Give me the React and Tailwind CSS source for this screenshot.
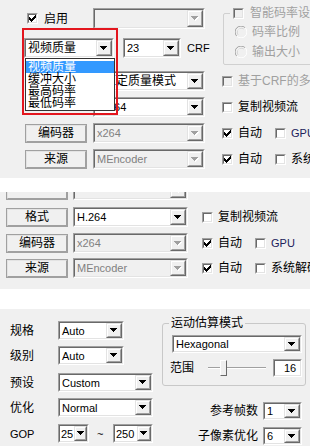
import React from "react";

const FONT = "font-['Liberation_Sans','Noto_Sans_CJK_SC',sans-serif]";

function Sunken({ className = "", disabled = false, children }) {
  return (
    <div className={`shrink-0 border border-t-[#a0a0a0] border-l-[#a0a0a0] border-r-white border-b-white ${className}`}>
      <div className={`flex h-full w-full items-stretch border border-t-[#696969] border-l-[#696969] border-r-[#e3e3e3] border-b-[#e3e3e3] ${disabled ? "bg-[#f0f0f0]" : "bg-white"}`}>
        {children}
      </div>
    </div>
  );
}

function Raised({ className = "", children }) {
  return (
    <div className={`shrink-0 border border-t-[#e3e3e3] border-l-[#e3e3e3] border-r-[#696969] border-b-[#696969] ${className}`}>
      <div className="flex h-full w-full items-center justify-center border border-t-white border-l-white border-r-[#a0a0a0] border-b-[#a0a0a0] bg-[#f0f0f0]">
        {children}
      </div>
    </div>
  );
}

function Tri({ disabled = false }) {
  const c = disabled ? "#a0a0a0" : "#000";
  return (
    <svg width="8" height="5" viewBox="0 0 8 5" shapeRendering="crispEdges">
      {disabled && (
        <g fill="#fff">
          <rect x="1" y="1" width="7" height="1" />
          <rect x="2" y="2" width="5" height="1" />
          <rect x="3" y="3" width="3" height="1" />
          <rect x="4" y="4" width="1" height="1" />
        </g>
      )}
      <g fill={c}>
        <rect x="0" y="0" width="7" height="1" />
        <rect x="1" y="1" width="5" height="1" />
        <rect x="2" y="2" width="3" height="1" />
        <rect x="3" y="3" width="1" height="1" />
      </g>
    </svg>
  );
}

function Combo({ className = "", text = "", disabled = false, arrowDisabled = false, textClass = "", padL = "pl-[2px]", arrowW = "w-[16px]" }) {
  return (
    <Sunken className={className} disabled={disabled}>
      <div className={`flex min-w-0 flex-1 items-center overflow-hidden whitespace-nowrap ${padL} ${textClass}`}>{text}</div>
      <Raised className={`h-full ${arrowW}`}>
        <Tri disabled={arrowDisabled} />
      </Raised>
    </Sunken>
  );
}

function Btn({ className = "", children }) {
  return (
    <div className={`shrink-0 border border-t-white border-l-white border-r-[#696969] border-b-[#696969] ${className}`}>
      <div className="flex h-full w-full items-center justify-center border border-t-[#e3e3e3] border-l-[#e3e3e3] border-r-[#a0a0a0] border-b-[#a0a0a0] bg-[#f0f0f0] outline outline-1 outline-[#a0a0a0]">
        {children}
      </div>
    </div>
  );
}

function Check({ checked = false, disabled = false }) {
  return (
    <div className="h-[11px] w-[11px] shrink-0 border border-t-[#a0a0a0] border-l-[#a0a0a0] border-r-white border-b-white">
      <div className={`flex h-full w-full items-center justify-center border border-t-[#696969] border-l-[#696969] border-r-[#e3e3e3] border-b-[#e3e3e3] ${disabled ? "bg-[#f0f0f0]" : "bg-white"}`}>
        {checked && (
          <svg width="7" height="7" viewBox="0 0 7 7" shapeRendering="crispEdges">
            <g fill="#000">
              <rect x="6" y="0" width="1" height="3" />
              <rect x="5" y="1" width="1" height="3" />
              <rect x="4" y="2" width="1" height="3" />
              <rect x="3" y="3" width="1" height="3" />
              <rect x="2" y="4" width="1" height="3" />
              <rect x="1" y="3" width="1" height="3" />
              <rect x="0" y="2" width="1" height="3" />
            </g>
          </svg>
        )}
      </div>
    </div>
  );
}

function Radio() {
  return (
    <svg width="12" height="12" viewBox="0 0 12 12" className="shrink-0">
      <path d="M10.2 1.8 A5.9 5.9 0 0 0 1.8 10.2" stroke="#a0a0a0" strokeWidth="1" fill="none" />
      <path d="M1.8 10.2 A5.9 5.9 0 0 0 10.2 1.8" stroke="#ffffff" strokeWidth="1" fill="none" />
      <path d="M8.8 3.2 A4 4 0 0 0 3.2 8.8" stroke="#c8c8c8" strokeWidth="1" fill="none" />
      <circle cx="6" cy="6" r="3.4" fill="#f0f0f0" />
    </svg>
  );
}

function CheckLabel({ checked = false, disabled = false, children, className = "", textClass = "" }) {
  return (
    <div className={`flex shrink-0 items-center gap-[5px] whitespace-nowrap ${disabled ? "text-[#a0a0a0]" : ""} ${className}`}>
      <Check checked={checked} disabled={disabled} />
      <span className={textClass}>{children}</span>
    </div>
  );
}

function Section1() {
  return (
    <div className="relative h-[178px] overflow-hidden bg-[#f0f0f0]">
      <div className="flex h-[71px]">
        <div className="w-[223px] shrink-0">
          <div className="mt-[8px] flex h-[21px] items-center">
            <div className="ml-[27px] flex w-[66px] items-center gap-[6px]">
              <Check checked />
              <span>启用</span>
            </div>
            <Combo className="h-[21px] w-[112px]" disabled arrowDisabled />
          </div>
          <div className="mt-[9px] flex h-[20px] items-center">
            <Combo className="ml-[24px] h-[20px] w-[90px]" text="视频质量" padL="pl-[2px]" />
            <Combo className="ml-[9px] h-[20px] w-[58px]" text="23" textClass="text-[11px]" />
            <span className="ml-[6px] text-[11px]">CRF</span>
          </div>
        </div>
        <fieldset className="mt-[6px] h-[59px] w-[100px] shrink-0 rounded-[2px] border border-[#d0d0d0] text-[#a0a0a0]">
          <legend className="ml-[6px] px-[3px]">
            <div className="flex h-[14px] items-center gap-[6px] whitespace-nowrap">
              <Check disabled />
              <span>智能码率设置</span>
            </div>
          </legend>
          <div className="ml-[11px] mt-[6px] flex h-[12px] items-center gap-[5px] whitespace-nowrap">
            <Radio />
            <span>码率比例</span>
          </div>
          <div className="ml-[11px] mt-[8px] flex h-[12px] items-center gap-[5px] whitespace-nowrap">
            <Radio />
            <span>输出大小</span>
          </div>
        </fieldset>
      </div>

      <div className="flex h-[20px] items-center">
        <Combo className="ml-[93px] h-[20px] w-[112px]" text="恒定质量模式" padL="pl-[9px]" />
        <CheckLabel disabled className="ml-[17px]">基于CRF的多次编码</CheckLabel>
      </div>
      <div className="mt-[6px] flex h-[20px] items-center">
        <Combo className="ml-[93px] h-[20px] w-[112px]" text="H.264" textClass="text-[11px]" />
        <CheckLabel className="ml-[17px]">复制视频流</CheckLabel>
      </div>
      <div className="mt-[6px] flex h-[20px] items-center">
        <Btn className="ml-[25px] h-[19px] w-[62px]">编码器</Btn>
        <Combo className="ml-[6px] h-[20px] w-[112px]" text="x264" disabled arrowDisabled textClass="text-[11px] text-[#808080]" />
        <CheckLabel checked className="ml-[17px]">自动</CheckLabel>
        <CheckLabel className="ml-[13px]" textClass="text-[11px] text-[#20205a]">GPU</CheckLabel>
      </div>
      <div className="mt-[6px] flex h-[20px] items-center">
        <Btn className="ml-[25px] h-[19px] w-[62px]">来源</Btn>
        <Combo className="ml-[6px] h-[20px] w-[112px]" text="MEncoder" disabled arrowDisabled textClass="text-[11px] text-[#808080]" />
        <CheckLabel checked className="ml-[17px]">自动</CheckLabel>
        <CheckLabel className="ml-[13px]">系统解码</CheckLabel>
      </div>

      <div className="absolute left-[25px] top-[58px] h-[53px] w-[90px] border border-[#333333] bg-white pt-[2px] leading-[12px]">
        <div className="h-[12px] bg-[#3399ff] pl-[2px] text-white">视频质量</div>
        <div className="h-[12px] pl-[2px]">缓冲大小</div>
        <div className="h-[12px] pl-[2px]">最高码率</div>
        <div className="h-[12px] pl-[2px]">最低码率</div>
      </div>
      <div className="absolute left-[22px] top-[28px] h-[87px] w-[96px] border-2 border-[#e3161e]" />
    </div>
  );
}

function Section2() {
  return (
    <div className="h-[97px] overflow-hidden bg-[#f0f0f0]">
      <div className="mt-[-12px] flex h-[20px] items-center">
        <Btn className="ml-[6px] h-[19px] w-[62px]" />
        <Combo className="ml-[5px] h-[20px] w-[115px]" disabled arrowDisabled />
      </div>
      <div className="mt-[7px] flex h-[20px] items-center">
        <Btn className="ml-[6px] h-[19px] w-[62px]">格式</Btn>
        <Combo className="ml-[5px] h-[20px] w-[115px]" text="H.264" textClass="text-[11px]" />
        <CheckLabel className="ml-[14px]">复制视频流</CheckLabel>
      </div>
      <div className="mt-[6px] flex h-[20px] items-center">
        <Btn className="ml-[6px] h-[19px] w-[62px]">编码器</Btn>
        <Combo className="ml-[5px] h-[20px] w-[115px]" text="x264" disabled arrowDisabled textClass="text-[11px] text-[#808080]" />
        <CheckLabel checked className="ml-[14px]">自动</CheckLabel>
        <CheckLabel className="ml-[13px]" textClass="text-[11px] text-[#20205a]">GPU</CheckLabel>
      </div>
      <div className="mt-[5px] flex h-[20px] items-center">
        <Btn className="ml-[6px] h-[19px] w-[62px]">来源</Btn>
        <Combo className="ml-[5px] h-[20px] w-[115px]" text="MEncoder" disabled arrowDisabled textClass="text-[11px] text-[#808080]" />
        <CheckLabel checked className="ml-[14px]">自动</CheckLabel>
        <CheckLabel className="ml-[13px]">系统解码</CheckLabel>
      </div>
    </div>
  );
}

function Section3() {
  return (
    <div className="flex h-[137px] overflow-hidden bg-[#f0f0f0]">
      <div className="w-[162px] shrink-0">
        <div className="mt-[12px] flex h-[19px] items-center">
          <span className="ml-[10px] w-[48px]">规格</span>
          <Combo className="h-[19px] w-[66px]" text="Auto" textClass="text-[11px]" />
        </div>
        <div className="mt-[6px] flex h-[19px] items-center">
          <span className="ml-[10px] w-[48px]">级别</span>
          <Combo className="h-[19px] w-[66px]" text="Auto" textClass="text-[11px]" />
        </div>
        <div className="mt-[8px] flex h-[19px] items-center">
          <span className="ml-[10px] w-[48px]">预设</span>
          <Combo className="h-[19px] w-[95px]" text="Custom" textClass="text-[11px]" />
        </div>
        <div className="mt-[6px] flex h-[19px] items-center">
          <span className="ml-[10px] w-[48px]">优化</span>
          <Combo className="h-[19px] w-[95px]" text="Normal" textClass="text-[11px]" />
        </div>
        <div className="mt-[7px] flex h-[19px] items-center">
          <span className="ml-[10px] w-[48px] text-[11px]">GOP</span>
          <Combo className="h-[19px] w-[31px]" text="25" textClass="text-[11px]" padL="pl-[1px]" arrowW="w-[13px]" />
          <span className="ml-[8px] w-[16px] text-[11px]">~</span>
          <Combo className="h-[19px] w-[40px]" text="250" textClass="text-[11px]" padL="pl-[1px]" arrowW="w-[14px]" />
        </div>
      </div>
      <div className="w-[148px] shrink-0">
        <fieldset className="mt-[7px] h-[70px] w-[144px] rounded-[3px] border border-[#c8c8c8]">
          <legend className="ml-[6px] h-[14px] px-[2px] leading-[14px]">运动估算模式</legend>
          <Combo className="ml-[9px] mt-[5px] h-[18px] w-[130px]" text="Hexagonal" textClass="text-[11px]" />
          <div className="mt-[6px] flex h-[18px] items-center">
            <span className="ml-[7px] w-[24px] whitespace-nowrap">范围</span>
            <div className="relative ml-[14px] h-[18px] w-[58px] shrink-0">
              <div className="mt-[8px] h-[2px] border-t border-b border-t-[#a0a0a0] border-b-white" />
              <div className="absolute left-[12px] top-[1px] h-[16px] w-[7px] border border-t-white border-l-white border-r-[#696969] border-b-[#696969] bg-[#f0f0f0]" />
            </div>
            <Sunken className="ml-[7px] h-[18px] w-[29px]">
              <span className="flex items-center pl-[9px] text-[11px]">16</span>
            </Sunken>
          </div>
        </fieldset>
        <div className="mt-[16px] flex h-[18px] items-center justify-end pr-[8px]">
          <span className="mr-[5px] whitespace-nowrap">参考帧数</span>
          <Combo className="h-[18px] w-[39px]" text="1" textClass="text-[11px]" />
        </div>
        <div className="mt-[7px] flex h-[18px] items-center justify-end pr-[8px]">
          <span className="mr-[5px] whitespace-nowrap">子像素优化</span>
          <Combo className="h-[18px] w-[39px]" text="6" textClass="text-[11px]" />
        </div>
      </div>
    </div>
  );
}

export default function App() {
  return (
    <div className={`h-[446px] w-[310px] overflow-hidden bg-white text-[12px] leading-[14px] text-black ${FONT}`}>
      <Section1 />
      <div className="h-[14px]" />
      <Section2 />
      <div className="h-[20px]" />
      <Section3 />
    </div>
  );
}
